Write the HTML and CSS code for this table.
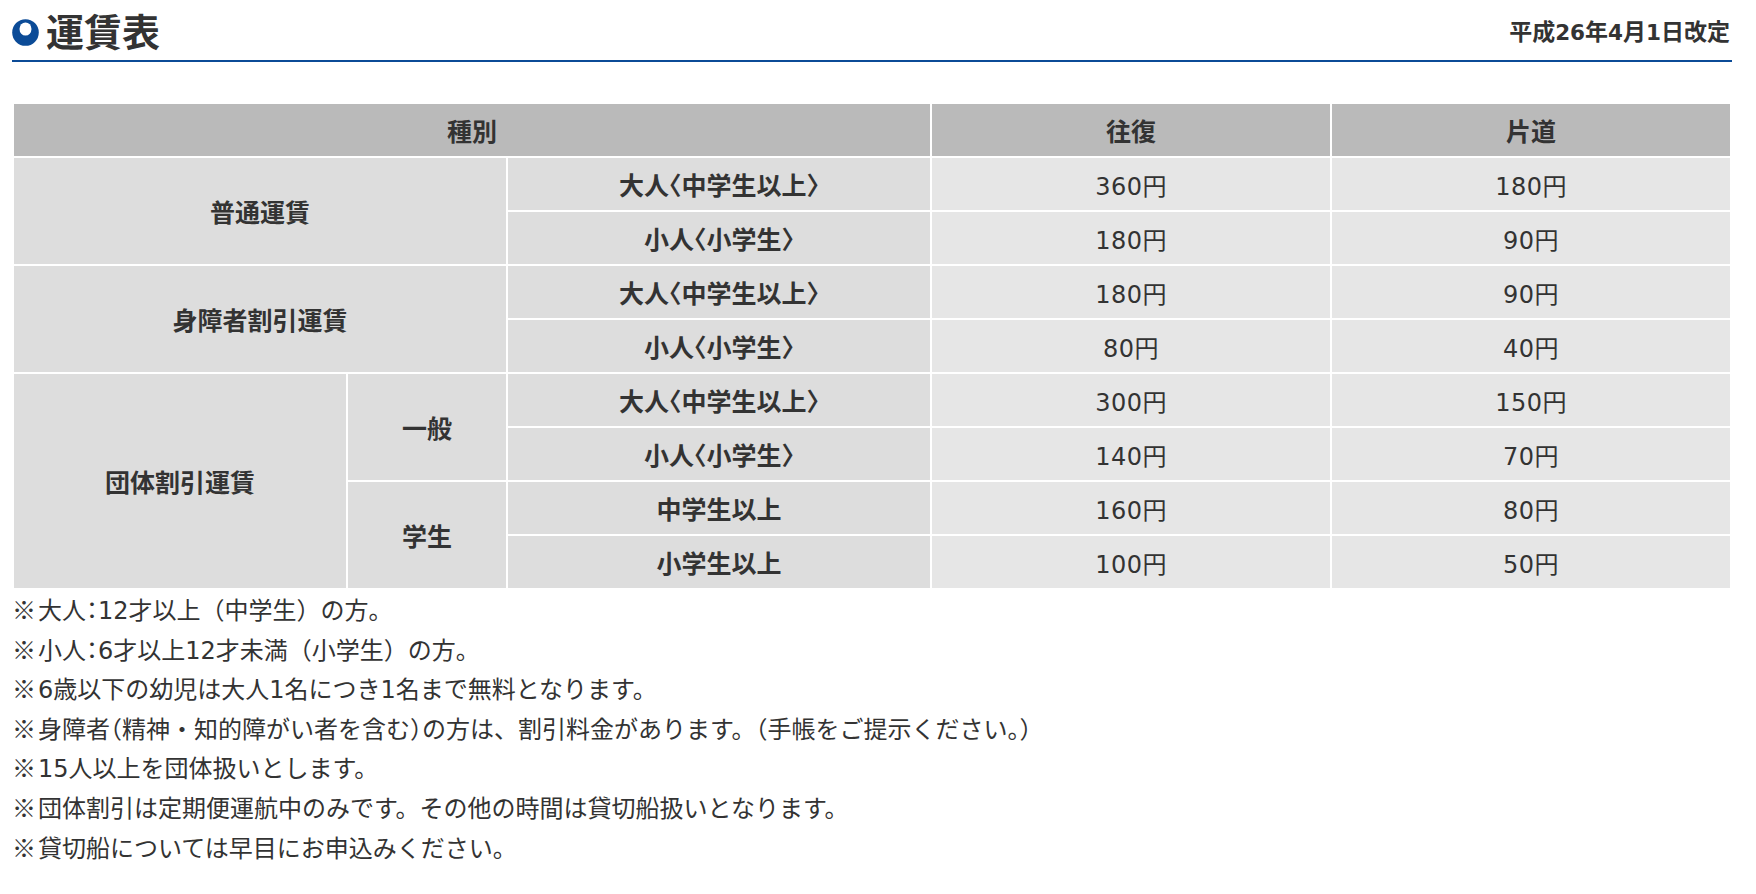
FILE: index.html
```html
<!DOCTYPE html>
<html lang="ja">
<head>
<meta charset="utf-8">
<title>運賃表</title>
<link rel="stylesheet" href="styles.css">
</head>
<body>
<div class="page">
  <div class="head">
    <h1 class="title">
      <svg class="mark" width="27" height="27" viewBox="0 0 27 27" aria-hidden="true">
        <circle cx="13.5" cy="13.5" r="13.3" fill="#0b4b97"/>
        <ellipse cx="13.5" cy="10" rx="6" ry="6.6" fill="#ffffff"/>
      </svg>
      <span>運賃表</span>
    </h1>
    <p class="date">平成<span class="num">26</span>年<span class="num">4</span>月<span class="num">1</span>日改定</p>
  </div>

  <table class="fare">
    <colgroup>
      <col class="c1"><col class="c2"><col class="c3"><col class="c4"><col class="c5">
    </colgroup>
    <thead>
      <tr>
        <th colspan="3">種別</th>
        <th>往復</th>
        <th>片道</th>
      </tr>
    </thead>
    <tbody>
      <tr>
        <th class="lab" colspan="2" rowspan="2">普通運賃</th>
        <th class="lab">大人<span class="br">〈</span>中学生以上<span class="br">〉</span></th>
        <td>360円</td><td>180円</td>
      </tr>
      <tr>
        <th class="lab">小人<span class="br">〈</span>小学生<span class="br">〉</span></th>
        <td>180円</td><td>90円</td>
      </tr>
      <tr>
        <th class="lab" colspan="2" rowspan="2">身障者割引運賃</th>
        <th class="lab">大人<span class="br">〈</span>中学生以上<span class="br">〉</span></th>
        <td>180円</td><td>90円</td>
      </tr>
      <tr>
        <th class="lab">小人<span class="br">〈</span>小学生<span class="br">〉</span></th>
        <td>80円</td><td>40円</td>
      </tr>
      <tr>
        <th class="lab" rowspan="4">団体割引運賃</th>
        <th class="lab" rowspan="2">一般</th>
        <th class="lab">大人<span class="br">〈</span>中学生以上<span class="br">〉</span></th>
        <td>300円</td><td>150円</td>
      </tr>
      <tr>
        <th class="lab">小人<span class="br">〈</span>小学生<span class="br">〉</span></th>
        <td>140円</td><td>70円</td>
      </tr>
      <tr>
        <th class="lab" rowspan="2">学生</th>
        <th class="lab">中学生以上</th>
        <td>160円</td><td>80円</td>
      </tr>
      <tr>
        <th class="lab">小学生以上</th>
        <td>100円</td><td>50円</td>
      </tr>
    </tbody>
  </table>

  <ul class="notes">
    <li><span class="mk">※</span>大人<span class="br">：</span>12才以上（中学生）の方。</li>
    <li><span class="mk">※</span>小人<span class="br">：</span>6才以上12才未満（小学生）の方。</li>
    <li><span class="mk">※</span>6歳以下の幼児は大人1名につき1名まで無料となります。</li>
    <li><span class="mk">※</span>身障者<span class="br">（</span>精神・知的障がい者を含む<span class="br">）</span>の方は、割引料金があります。<span class="br">（</span>手帳をご提示ください。<span class="br">）</span></li>
    <li><span class="mk">※</span>15人以上を団体扱いとします。</li>
    <li><span class="mk">※</span>団体割引は定期便運航中のみです。その他の時間は貸切船扱いとなります。</li>
    <li><span class="mk">※</span>貸切船については早目にお申込みください。</li>
  </ul>
</div>
</body>
</html>
```

FILE: styles.css
```css
html, body {
  margin: 0;
  padding: 0;
  background: #ffffff;
}

body {
  font-family: "Noto Sans CJK JP", "Noto Sans", sans-serif;
  color: #333333;
}

.page {
  width: 1720px;
  margin-left: 12px;
}

.head {
  display: flex;
  align-items: center;
  justify-content: space-between;
  height: 60px;
  border-bottom: 2px solid #0b4b97;
}

.title {
  display: flex;
  align-items: center;
  gap: 7px;
  margin: 0;
  font-size: 38px;
  font-weight: 700;
  line-height: 1;
  color: #333333;
}

.mark {
  display: block;
  flex: none;
  margin-top: 5px;
}

.date {
  margin: 0 2px 0 0;
  font-size: 23px;
  font-weight: 700;
  color: #333333;
}

.num {
  font-family: "DejaVu Sans", "Noto Sans CJK JP", sans-serif;
  font-size: 21.5px;
  font-weight: 700;
}

.br {
  font-feature-settings: "halt" 1;
}

.mk {
  font-family: "Noto Sans CJK JP", sans-serif;
  line-height: 1;
  margin-right: 2px;
}

.fare {
  width: 1720px;
  margin-top: 40px;
  border-collapse: separate;
  border-spacing: 2px;
  table-layout: fixed;
}

.c1 { width: 332px; }
.c2 { width: 158px; }
.c3 { width: 422px; }
.c4 { width: 398px; }
.c5 { width: 398px; }

.fare th,
.fare td {
  height: 52px;
  padding: 0;
  text-align: center;
  vertical-align: middle;
  font-size: 25px;
  color: #333333;
}

.fare thead th {
  background: #bababa;
  font-weight: 700;
}

.fare .lab {
  background: #dddddd;
  font-weight: 700;
}

.fare td {
  background: #e6e6e6;
  font-family: "DejaVu Sans", "Noto Sans CJK JP", sans-serif;
  font-size: 24px;
  font-weight: 400;
  letter-spacing: 0.5px;
}

.notes {
  list-style: none;
  margin: 0;
  padding: 2px 0 0;
  font-family: "DejaVu Sans", "Noto Sans CJK JP", sans-serif;
  font-size: 24px;
  line-height: 39.6px;
  color: #333333;
}

.notes li {
  height: 39.6px;
}
```
